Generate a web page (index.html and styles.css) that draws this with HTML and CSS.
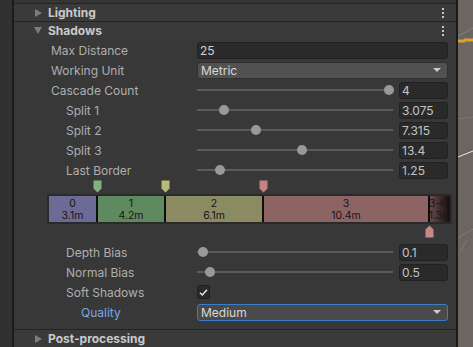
FILE: index.html
```html
<!DOCTYPE html>
<html lang="en">
<head>
    <meta charset="UTF-8">
    <title>Shadows Inspector</title>
    <link rel="stylesheet" href="styles.css">
</head>
<body>

    <div class="gutter"></div>

    <div class="inspector">
        <div class="top-strip"></div>

        <div class="section-header">
            <span class="foldout closed"></span>
            <span class="section-title">Lighting</span>
            <svg class="kebab" width="4" height="10" viewBox="0 0 4 10"><rect x="1" y="0" width="2" height="2"/><rect x="1" y="4" width="2" height="2"/><rect x="1" y="8" width="2" height="2"/></svg>
        </div>

        <div class="section-header">
            <span class="foldout open"></span>
            <span class="section-title">Shadows</span>
            <svg class="kebab" width="4" height="10" viewBox="0 0 4 10"><rect x="1" y="0" width="2" height="2"/><rect x="1" y="4" width="2" height="2"/><rect x="1" y="8" width="2" height="2"/></svg>
        </div>

        <div class="section-body">
            <div class="row">
                <label class="label">Max Distance</label>
                <div class="field">25</div>
            </div>
            <div class="row">
                <label class="label">Working Unit</label>
                <div class="dropdown">Metric<span class="arrow"></span></div>
            </div>
            <div class="row">
                <label class="label">Cascade Count</label>
                <div class="slider"><span class="thumb" style="left: 192px"></span></div>
                <div class="field num">4</div>
            </div>
            <div class="row indent">
                <label class="label">Split 1</label>
                <div class="slider"><span class="thumb" style="left: 27px"></span></div>
                <div class="field num">3.075</div>
            </div>
            <div class="row indent">
                <label class="label">Split 2</label>
                <div class="slider"><span class="thumb" style="left: 59px"></span></div>
                <div class="field num">7.315</div>
            </div>
            <div class="row indent">
                <label class="label">Split 3</label>
                <div class="slider"><span class="thumb" style="left: 105px"></span></div>
                <div class="field num">13.4</div>
            </div>
            <div class="row indent">
                <label class="label">Last Border</label>
                <div class="slider"><span class="thumb" style="left: 23px"></span></div>
                <div class="field num">1.25</div>
            </div>

            <div class="cascades">
                <svg class="marker" style="left: 79px" width="9" height="13" viewBox="0 0 9 13"><path d="M0.5 0.5H8.5V8.5L4.5 12.5L0.5 8.5Z" fill="#7fb47f"/></svg>
                <svg class="marker" style="left: 147px" width="9" height="13" viewBox="0 0 9 13"><path d="M0.5 0.5H8.5V8.5L4.5 12.5L0.5 8.5Z" fill="#b9b97c"/></svg>
                <svg class="marker" style="left: 245px" width="9" height="13" viewBox="0 0 9 13"><path d="M0.5 0.5H8.5V8.5L4.5 12.5L0.5 8.5Z" fill="#c28484"/></svg>

                <div class="cascade-bar">
                    <div class="cascade c0"><span>0</span><span>3.1m</span></div>
                    <div class="sep"></div>
                    <div class="cascade c1"><span>1</span><span>4.2m</span></div>
                    <div class="sep"></div>
                    <div class="cascade c2"><span>2</span><span>6.1m</span></div>
                    <div class="sep"></div>
                    <div class="cascade c3"><span>3</span><span>10.4m</span></div>
                    <div class="sep"></div>
                    <div class="cascade fade"><span>3→F</span><span>1.3m</span></div>
                </div>

                <svg class="marker bottom" style="left: 411px" width="9" height="13" viewBox="0 0 9 13"><path d="M0.5 12.5H8.5V4.5L4.5 0.5L0.5 4.5Z" fill="#c48a8a"/></svg>
            </div>

            <div class="row indent">
                <label class="label">Depth Bias</label>
                <div class="slider"><span class="thumb" style="left: 6px"></span></div>
                <div class="field num">0.1</div>
            </div>
            <div class="row indent">
                <label class="label">Normal Bias</label>
                <div class="slider"><span class="thumb" style="left: 13px"></span></div>
                <div class="field num">0.5</div>
            </div>
            <div class="row indent">
                <label class="label">Soft Shadows</label>
                <div class="checkbox">
                    <svg width="11" height="11" viewBox="0 0 11 11"><path d="M2 5.8L4.3 8L9 2.8" fill="none" stroke="#e6e6e6" stroke-width="1.5"/></svg>
                </div>
            </div>
            <div class="row indent-2">
                <label class="label highlight">Quality</label>
                <div class="dropdown focused">Medium<span class="arrow"></span></div>
            </div>
        </div>

        <div class="section-header">
            <span class="foldout closed"></span>
            <span class="section-title">Post-processing</span>
        </div>
    </div>

    <div class="scene">
        <svg width="15" height="347" viewBox="0 0 15 347">
            <path d="M0 36L15 28" stroke="#85807a" stroke-width="1" fill="none"/>
            <path d="M0 41H6L7 40H15" stroke="#e0a02c" stroke-width="3" fill="none"/>
            <path d="M0 119L15 117" stroke="#7c7771" stroke-width="1" fill="none"/>
            <path d="M0 157L15 151" stroke="#e8e8e8" stroke-width="1" fill="none"/>
            <path d="M0 238L15 229" stroke="#837e78" stroke-width="1" fill="none"/>
            <path d="M2 252L9 240" stroke="#7d7872" stroke-width="1" fill="none"/>
        </svg>
    </div>

</body>
</html>
```

FILE: styles.css
```css
body {
    margin: 0;
    height: 347px;
    overflow: hidden;
    display: flex;
    background: #383838;
    font-family: Inter, "Noto Sans", sans-serif;
    font-size: 12px;
    color: #afafaf;
}
.gutter {
    width: 12px;
    background: #313131;
}
.inspector {
    width: 442px;
    border-left: 2px solid #1b1b1b;
    border-right: 2px solid #1b1b1b;
    background: #383838;
    display: flex;
    flex-direction: column;
}
.top-strip {
    height: 3px;
    background: #353535;
}
.section-header {
    height: 17px;
    border-top: 1px solid #242424;
    background: #3a3a3a;
    display: flex;
    align-items: center;
    padding-left: 20px;
    padding-right: 11px;
}
.section-title {
    flex: 1;
    font-weight: 700;
    color: #cacaca;
    margin-left: 6px;
}
.foldout {
    width: 0;
    height: 0;
}
.foldout.closed {
    border-top: 4px solid transparent;
    border-bottom: 4px solid transparent;
    border-left: 7px solid #7c7c7c;
    margin-left: 1px;
}
.foldout.open {
    border-left: 4px solid transparent;
    border-right: 4px solid transparent;
    border-top: 7px solid #7c7c7c;
}
.kebab {
    fill: #c4c4c4;
}
.section-body {
    padding-top: 1px;
    padding-bottom: 7px;
}
.row {
    height: 20px;
    display: flex;
    align-items: center;
    padding-right: 8px;
}
.label {
    flex: 0 0 183px;
    box-sizing: border-box;
    padding-left: 37px;
    white-space: nowrap;
}
.row.indent .label {
    padding-left: 52px;
}
.row.indent-2 .label {
    padding-left: 67px;
}
.label.highlight {
    color: #7ca6e4;
}
.field {
    flex: 1;
    height: 17px;
    box-sizing: border-box;
    background: #2a2a2a;
    border: 1px solid #212121;
    border-radius: 3px;
    color: #d2d2d2;
    padding-left: 2px;
    line-height: 15px;
}
.field.num {
    flex: 0 0 49px;
    color: #c4c4c4;
}
.dropdown {
    flex: 1;
    height: 17px;
    box-sizing: border-box;
    background: #515151;
    border: 1px solid #303030;
    border-radius: 3px;
    color: #d8d8d8;
    padding-left: 3px;
    line-height: 15px;
    display: flex;
    justify-content: space-between;
    align-items: center;
    padding-right: 6px;
}
.dropdown.focused {
    border-color: #3b7dc8;
    background: #4a4a4a;
}
.arrow {
    width: 0;
    height: 0;
    border-left: 4px solid transparent;
    border-right: 4px solid transparent;
    border-top: 4px solid #cccccc;
}
.slider {
    flex: 1;
    height: 20px;
    margin-right: 6px;
    position: relative;
}
.slider::before {
    content: "";
    position: absolute;
    left: 0;
    right: 0;
    top: 9px;
    height: 2px;
    background: #5b5b5b;
}
.thumb {
    position: absolute;
    top: 5px;
    width: 10px;
    height: 10px;
    margin-left: -5px;
    border-radius: 50%;
    background: #999999;
}
.checkbox {
    width: 13px;
    height: 14px;
    box-sizing: border-box;
    background: #2a2a2a;
    border: 1px solid #1f1f1f;
    border-radius: 2px;
    display: flex;
    align-items: center;
    justify-content: center;
}
.cascades {
    position: relative;
    height: 58px;
    padding-top: 14px;
    margin-bottom: 4px;
    box-sizing: border-box;
}
.marker {
    position: absolute;
    top: 0;
}
.marker.bottom {
    top: 45px;
}
.cascade-bar {
    margin-left: 33px;
    width: 401px;
    height: 26px;
    border: 2px solid #2a2a2a;
    display: flex;
}
.cascade {
    display: flex;
    flex-direction: column;
    align-items: center;
    font-size: 10.5px;
    line-height: 12px;
    padding-top: 2px;
    color: #161616;
    overflow: hidden;
    white-space: nowrap;
}
.sep {
    width: 2px;
    background: #0d0d0d;
}
.c0 { width: 47px; background: #6b6b96; }
.c1 { width: 66px; background: #5f8a5f; }
.c2 { width: 96px; background: #8b8b63; }
.c3 { width: 164px; background: #8c6464; }
.fade {
    width: 20px;
    background: linear-gradient(to right, #6e4a4a, #140e0e);
}
.scene {
    flex: 1;
    background: #6c6660;
}
```
